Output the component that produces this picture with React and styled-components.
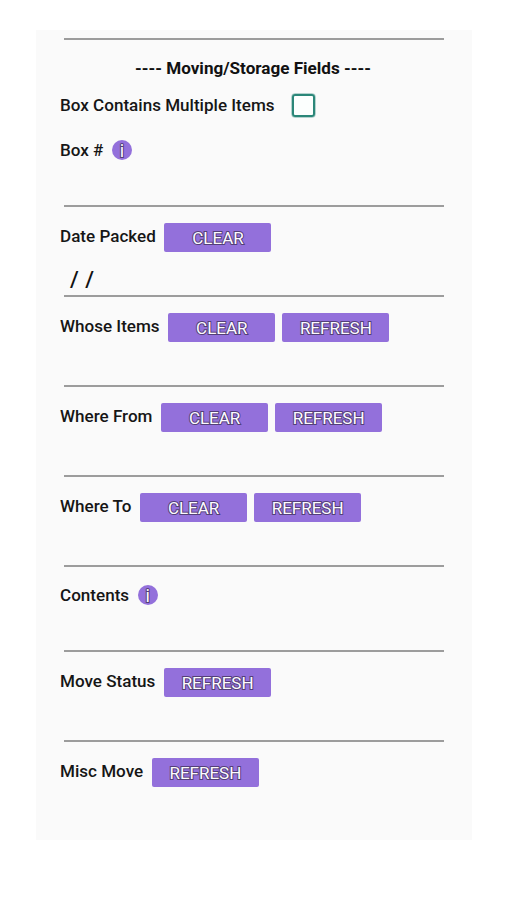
import React from "react";
import styled, { createGlobalStyle } from "styled-components";

const GlobalStyle = createGlobalStyle`
  * { box-sizing: border-box; }
  body { margin: 0; background: #fff; }
`;

const Page = styled.div`
  min-height: 900px;
  padding: 30px 35px 0 36px;
  background: #fff;
  font-family: Roboto, "Noto Sans", sans-serif;
  color: #161616;
`;

const Form = styled.form`
  display: flex;
  flex-direction: column;
  height: 810px;
  padding: 8px 28px 0 24px;
  background: #fafafa;
`;

const Rule = styled.div`
  flex: none;
  height: 2px;
  margin-left: 4px;
  background: #9c9c9c;
`;

const Heading = styled.h2`
  margin: 0;
  height: 55px;
  line-height: 57px;
  padding-left: 2px;
  text-align: center;
  font-size: 17.1px;
  font-weight: 700;
  color: #111;
  white-space: nowrap;
`;

const CheckRow = styled.label`
  display: flex;
  align-items: center;
  height: 20px;
  gap: 17px;
  margin-bottom: 24px;
`;

const Label = styled.span`
  font-size: 17.07px;
  font-weight: 500;
  line-height: 20px;
  white-space: nowrap;
`;

const Checkbox = styled.input`
  appearance: none;
  width: 23px;
  height: 23px;
  margin: 1px 0 0;
  border: 2px solid #2b8779;
  outline: 0.5px solid #2b877955;
  border-radius: 3px;
  background: #fcfffe;
`;

const Field = styled.section`
  flex: none;
  display: flex;
  flex-direction: column;
  height: ${(p) => p.$height}px;
`;

const FieldHeader = styled.div`
  flex: none;
  display: flex;
  align-items: center;
  height: ${(p) => (p.$height || 29)}px;
  margin-top: ${(p) => p.$top}px;
`;

const HeaderLabel = styled(Label)`
  margin: -4px 8.7px 0 0;
`;

const InfoLabel = styled(Label)`
  margin-right: 8.5px;
`;

const Buttons = styled.div`
  display: flex;
  gap: 7px;
`;

const outlined = `
  color: #fdfaff;
  -webkit-text-stroke: 2px #533f78;
  paint-order: stroke fill;
`;

const Action = styled.button`
  width: 107px;
  height: 29px;
  padding: 1px 0 0;
  border: 0;
  border-radius: 2px;
  background: #9370db;
  font: 400 17px/28px Roboto, sans-serif;
  ${outlined}
`;

const Info = styled.button`
  display: flex;
  justify-content: center;
  align-items: center;
  width: 20px;
  height: 20px;
  padding: 3px 0 0;
  border: 0;
  border-radius: 50%;
  background: #9370db;
  font: 400 18px/18px Roboto, sans-serif;
  ${outlined}
`;

const Value = styled.div`
  flex: 1;
  min-height: 0;
  padding-left: 10px;
  font-size: 22.5px;
  font-weight: 500;
  line-height: 54px;
  letter-spacing: 0.5px;
  color: #111;
`;

function FormField({ name, height = 90, headerTop = 16, headerHeight, info, actions = [], value, last }) {
  return (
    <Field $height={height}>
      <FieldHeader $top={headerTop} $height={headerHeight}>
        {info ? <InfoLabel>{name}</InfoLabel> : <HeaderLabel>{name}</HeaderLabel>}
        {info && <Info type="button" aria-label={`About ${name}`}>i</Info>}
        <Buttons>
          {actions.map((action) => (
            <Action type="button" key={action}>{action}</Action>
          ))}
        </Buttons>
      </FieldHeader>
      <Value>{value}</Value>
      {!last && <Rule />}
    </Field>
  );
}

export default function App() {
  return (
    <Page>
      <GlobalStyle />
      <Form>
        <Rule />
        <Heading>---- Moving/Storage Fields ----</Heading>
        <CheckRow>
          <Label>Box Contains Multiple Items</Label>
          <Checkbox type="checkbox" />
        </CheckRow>
        <FormField name="Box #" height={68} headerTop={0} headerHeight={21} info />
        <FormField name="Date Packed" actions={["CLEAR"]} value="/ /" />
        <FormField name="Whose Items" actions={["CLEAR", "REFRESH"]} />
        <FormField name="Where From" actions={["CLEAR", "REFRESH"]} />
        <FormField name="Where To" actions={["CLEAR", "REFRESH"]} />
        <FormField name="Contents" height={85} headerTop={13} info />
        <FormField name="Move Status" actions={["REFRESH"]} />
        <FormField name="Misc Move" actions={["REFRESH"]} last />
      </Form>
    </Page>
  );
}
